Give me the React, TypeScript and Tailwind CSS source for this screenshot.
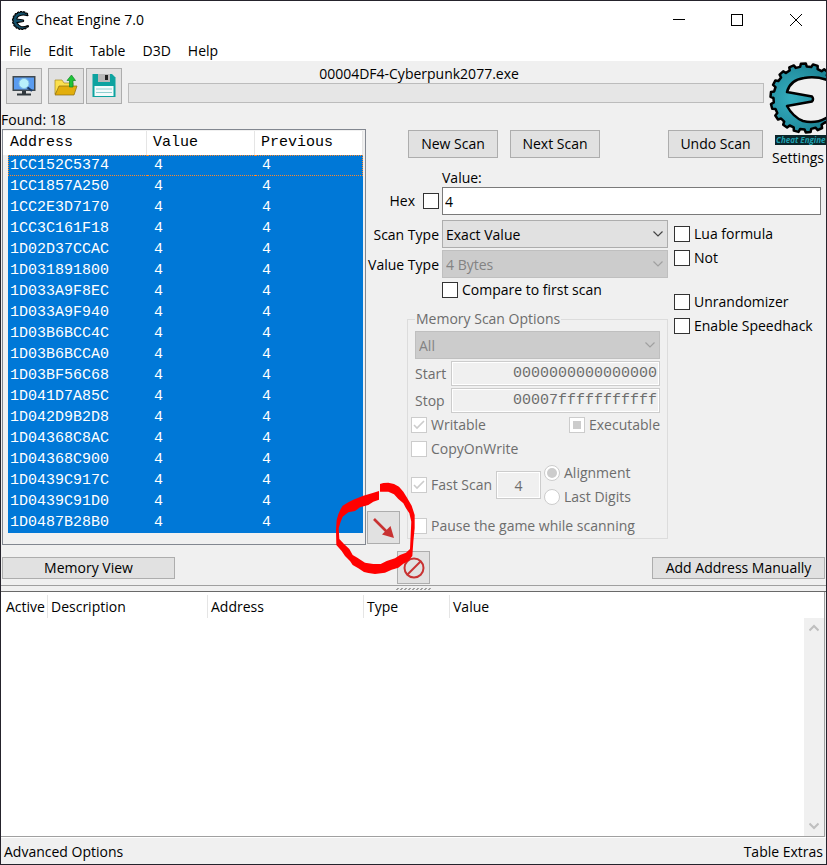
import type { ReactNode } from "react";

const addresses = [
  "1CC152C5374", "1CC1857A250", "1CC2E3D7170", "1CC3C161F18", "1D02D37CCAC", "1D031891800",
  "1D033A9F8EC", "1D033A9F940", "1D03B6BCC4C", "1D03B6BCCA0", "1D03BF56C68", "1D041D7A85C",
  "1D042D9B2D8", "1D04368C8AC", "1D04368C900", "1D0439C917C", "1D0439C91D0", "1D0487B28B0",
];

const mono = "font-['Liberation_Mono',monospace] text-[15px]";
const buttonLook = "border border-[#adadad] bg-[#e1e1e1]";

// Outer edge of the gear, walked from the upper right round the left to the lower right.
function gearEdge() {
  const points: string[] = [];
  const teeth = 14;
  const step = 284 / teeth;
  const at = (deg: number, r: number) => {
    const a = (deg * Math.PI) / 180;
    points.push(`${(36 + r * Math.cos(a)).toFixed(1)} ${(36 + r * Math.sin(a)).toFixed(1)}`);
  };
  for (let i = 0; i < teeth; i++) {
    const d = -38 - i * step;
    at(d, 31.5);
    at(d - step * 0.4, 31.5);
    at(d - step * 0.5, 34.5);
    at(d - step * 0.9, 34.5);
  }
  at(-322, 31.5);
  return points.join(" L");
}

const gearPath = `M${gearEdge()} L57 56 Q46 62 34 59 Q24 55 18 44 L43 39.5 Q45 37 43 34.500 L18 30 Q21 18 35 16 Q47 14 58 18 Z`;

function Gear({ className, box, fill, stroke }: { className: string; box: string; fill: string; stroke: number }) {
  return (
    <svg className={className} viewBox={box} aria-hidden="true">
      <defs>
        <radialGradient id="teal" cx="0.35" cy="0.5" r="0.6">
          <stop offset="0" stopColor="#35aebf" />
          <stop offset="1" stopColor="#1c8496" />
        </radialGradient>
      </defs>
      <path d={gearPath} fill={fill} stroke="#000" strokeWidth={stroke} strokeLinejoin="round" />
    </svg>
  );
}

function Check({ label, checked, mixed, disabled, before }: { label: string; checked?: boolean; mixed?: boolean; disabled?: boolean; before?: boolean }) {
  return (
    <label className={`flex h-5 items-center whitespace-nowrap ${before ? "gap-2" : "gap-1"} ${disabled ? "text-[#6d6d6d]" : ""}`}>
      {before && label}
      <span className="relative flex">
        <input
          type="checkbox"
          defaultChecked={checked}
          disabled={disabled}
          className="size-4 appearance-none border border-[#333] bg-white disabled:border-[#ccc]"
        />
        {checked && (
          <svg className="pointer-events-none absolute inset-0 size-4" viewBox="0 0 16 16" fill="none" aria-hidden="true">
            <path d="M3 8l3 3 7-7" stroke="#ccc" strokeWidth="1.6" />
          </svg>
        )}
        {mixed && <span className="pointer-events-none absolute inset-1 bg-[#ccc]" />}
      </span>
      {!before && label}
    </label>
  );
}

function Radio({ label, checked }: { label: string; checked?: boolean }) {
  return (
    <label className="flex h-6 items-center gap-1 whitespace-nowrap text-[#6d6d6d]">
      <span className="relative flex">
        <input type="radio" name="fast" defaultChecked={checked} disabled className="size-4 appearance-none rounded-full border border-[#ccc] bg-white" />
        {checked && <span className="pointer-events-none absolute inset-[3px] rounded-full bg-[#ccc]" />}
      </span>
      {label}
    </label>
  );
}

function Drop({ id, label, value, disabled }: { id: string; label?: string; value: string; disabled?: boolean }) {
  return (
    <div className="relative min-w-0 flex-1">
      <select
        id={id}
        aria-label={label}
        disabled={disabled}
        className="block h-7 w-full appearance-none border border-[#adadad] bg-[#e1e1e1] pt-px pl-[3px] opacity-100 disabled:border-[#bfbfbf] disabled:bg-[#ccc] disabled:text-[#838383]"
      >
        <option>{value}</option>
      </select>
      <svg className={`pointer-events-none absolute top-2.5 right-1 h-2 w-3 ${disabled ? "text-[#a0a0a0]" : "text-[#444]"}`} viewBox="0 0 12 8" fill="none" aria-hidden="true">
        <path d="M1.5 1.5L6 6l4.500-4.500" stroke="currentColor" strokeWidth="1.200" />
      </svg>
    </div>
  );
}

function Tool({ label, children }: { label: string; children: ReactNode }) {
  return (
    <button aria-label={label} className={`flex size-9 items-center justify-center ${buttonLook}`}>
      <svg className="size-6" viewBox="0 0 24 24" aria-hidden="true">{children}</svg>
    </button>
  );
}

function TitleBar() {
  return (
    <header className="bg-white">
      <div className="flex h-[38px] items-center pl-2.5">
        <Gear className="size-[19px]" box="0 0 64 72" fill="#14516b" stroke={4} />
        <h1 className="ml-[5px] flex-1">Cheat Engine 7.0</h1>
        <button aria-label="Minimize" className="flex w-[58px] justify-center">
          <svg className="size-3" viewBox="0 0 12 12" aria-hidden="true"><path d="M0 5.500h12" stroke="#000" /></svg>
        </button>
        <button aria-label="Maximize" className="flex w-[58px] justify-center">
          <svg className="size-3" viewBox="0 0 12 12" aria-hidden="true"><rect x=".5" y=".5" width="11" height="11" fill="none" stroke="#000" /></svg>
        </button>
        <button aria-label="Close" className="flex w-[60px] justify-center">
          <svg className="size-3" viewBox="0 0 12 12" aria-hidden="true"><path d="M0 0l12 12M12 0L0 12" stroke="#000" /></svg>
        </button>
      </div>
      <nav className="flex h-[22px] items-end gap-[17px] pl-2">
        {["File", "Edit", "Table", "D3D", "Help"].map((m) => <button key={m}>{m}</button>)}
      </nav>
    </header>
  );
}

function Toolbar() {
  return (
    <div className="col-span-2 flex pt-[7px] pl-[5px]">
      <div className="flex gap-0.5">
        <Tool label="Select a process">
          <rect x=".5" y="2" width="23" height="15" fill="#40494f" />
          <rect x="2" y="3.500" width="20" height="12" fill="#5a9cf0" />
          <path d="M10 17h4v3h-4z" fill="#30383d" /><path d="M5 20.500h14" stroke="#30383d" strokeWidth="2" />
          <path d="M15 13l5 4" stroke="#1c3c66" strokeWidth="2.200" />
          <circle cx="12" cy="9.500" r="5" fill="#b8f0fb" stroke="#83bfe6" />
        </Tool>
        <span className="w-0.5" />
        <Tool label="Open file">
          <path d="M1 20V6h7l2 3h9v5H6z" fill="#fbe04f" stroke="#a88a1c" strokeWidth=".7" />
          <path d="M1 21l4-9h18l-3 9z" fill="#e2ae0c" stroke="#8b6c10" strokeWidth=".7" />
          <path d="M15.500 13V6.500H13L17.500 1l4 5.500h-2.500V13z" fill="#1fc43a" stroke="#128526" strokeWidth=".7" />
        </Tool>
        <Tool label="Save">
          <path d="M.5 0H20l3.500 3.500V23H.5z" fill="#0da3a0" />
          <path d="M6 0h12v8H6z" fill="#b8b8b8" /><path d="M13 1h3v5h-3z" fill="#222" />
          <path d="M2.500 12h19v10h-19z" fill="#f4fbfb" />
          <path d="M4 15h16M4 18.500h16" stroke="#8fcfd0" />
        </Tool>
      </div>
      <div className="mr-px ml-1.5 flex flex-1 flex-col">
        <p className="-mt-1 h-5 pr-[54px] text-center">00004DF4-Cyberpunk2077.exe</p>
        <div role="progressbar" aria-label="Scan progress" className="-mt-px h-5 border border-[#bcbcbc] bg-[#e6e6e6]" />
      </div>
    </div>
  );
}

function Results() {
  return (
    <section className="row-span-2 flex flex-col">
      <p className="h-5 leading-[22px]">Found: 18</p>
      <div className="ml-px flex-1 border border-[#828790] pt-px pr-0.5 pb-2.5">
        <table className={`w-full table-fixed border-separate border-spacing-0 text-left ${mono}`}>
          <colgroup>
            <col className="w-[5px]" /><col className="w-[139px]" /><col className="w-[108px]" /><col />
          </colgroup>
          <thead className="bg-white">
            <tr className="h-6 leading-5">
              <th colSpan={2} className="border-r border-[#e5e5e5] pl-[7px] font-normal">Address</th>
              <th className="border-r border-[#e5e5e5] pl-1.5 font-normal">Value</th>
              <th className="border-r border-[#e5e5e5] pl-1.5 font-normal">Previous</th>
            </tr>
          </thead>
          <tbody className="text-white">
            {addresses.map((a, i) => {
              const line = i === 0 ? "border-y border-dotted border-[#ff8728]" : "";
              return (
                <tr key={a} className="h-[21px] leading-[19px]">
                  <td />
                  <td className={`bg-[#0078d7] ${line} ${i === 0 ? "border-l pl-px" : "pl-0.5"}`}>{a}</td>
                  <td className={`bg-[#0078d7] pl-[7px] ${line}`}>4</td>
                  <td className={`bg-[#0078d7] pl-[7px] ${line} ${i === 0 ? "border-r" : ""}`}>4</td>
                </tr>
              );
            })}
          </tbody>
        </table>
      </div>
    </section>
  );
}

function MemoryOptions() {
  return (
    <fieldset disabled className="ml-[7px] min-w-0 flex-1 border border-[#dcdcdc] px-[7px] pt-0.5 pb-0.5 text-[#6d6d6d]">
      <legend className="h-5 px-px leading-5">Memory Scan Options</legend>
      <div className="flex"><Drop id="region" label="Memory region" value="All" disabled /></div>
      {[["Start", "0000000000000000"], ["Stop", "00007fffffffffff"]].map(([label, value]) => (
        <label key={label} className="mt-0.5 flex h-[25px] items-center">
          <span className="w-9">{label}</span>
          <input defaultValue={value} className={`h-full min-w-0 flex-1 border border-[#ccc] bg-[#f0f0f0] px-0.5 text-right shadow-[inset_0_0_0_1px_#fff] ${mono}`} />
        </label>
      ))}
      <div className="-ml-1 flex flex-col">
        <div className="mt-0.5 flex justify-between">
          <Check label="Writable" checked disabled />
          <Check label="Executable" mixed disabled />
        </div>
        <div className="mt-1"><Check label="CopyOnWrite" disabled /></div>
        <div className="mt-0.5 flex h-12 items-center">
          <div className="w-[85px]"><Check label="Fast Scan" checked disabled /></div>
          <input aria-label="Alignment value" defaultValue="4" className="h-7 w-[45px] border border-[#ccc] bg-[#f0f0f0] text-center shadow-[inset_0_0_0_1px_#fff]" />
          <div className="ml-[3px]"><Radio label="Alignment" checked /><Radio label="Last Digits" /></div>
        </div>
        <div className="mt-[7px]"><Check label="Pause the game while scanning" disabled /></div>
      </div>
    </fieldset>
  );
}

function ScanPanel() {
  return (
    <section className="col-span-2">
      <label htmlFor="value" className="ml-[76px] block h-[19px] leading-[19px]">Value:</label>
      <div className="flex items-center pr-[5px]">
        <div className="flex w-[76px] justify-end pr-[3px]"><Check label="Hex" before /></div>
        <input id="value" defaultValue="4" className="h-7 min-w-0 flex-1 border border-[#7a7a7a] bg-white px-0.5" />
      </div>
      <div className="flex">
        <div className="min-w-0 flex-1 pt-[5px]">
          <div className="flex items-center">
            <label htmlFor="scan" className="w-[76px] pt-px pr-[3px] text-right whitespace-nowrap">Scan Type</label>
            <Drop id="scan" value="Exact Value" />
          </div>
          <div className="mt-0.5 flex items-center">
            <label htmlFor="type" className="flex w-[76px] justify-end pt-px pr-[3px] whitespace-nowrap">Value Type</label>
            <Drop id="type" value="4 Bytes" disabled />
          </div>
          <div className="mt-0.5 ml-[76px]"><Check label="Compare to first scan" /></div>
          <div className="mt-[9px] flex items-end pb-1.5">
            <div className="relative -mb-[5px] ml-px">
              <button aria-label="Copy selected items to the address list" className={`flex size-[33px] items-center justify-center ${buttonLook}`}>
                <svg className="size-6" viewBox="0 0 24 24" aria-hidden="true">
                  <path d="M2 3l13 13" stroke="#c83232" strokeWidth="2.600" /><path d="M22 22L10 18.500 18.500 10z" fill="#c83232" />
                </svg>
              </button>
              <svg className="pointer-events-none absolute -top-9 -left-[47px] z-10 h-[125px] w-[130px] max-w-none" viewBox="0 0 390 375" aria-hidden="true">
                <path
                  fill="#f00"
                  d="M177 48L158 54 130 62 100 74 85 82 68 92 62 102 55 118 50 135 48 165 49 210 65 228 75 243 90 258 98 270 115 280 132 291 145 294 165 297 195 293 215 284 235 278 250 266 265 258 277 243 280 200 284 160 284 120 275 92 262 70 250 50 237 35 222 27 205 23 190 24 180 27V50L205 50 222 58 235 72 250 85 258 100 268 115 274 140 272 180 270 222 258 233 240 240 225 250 200 258 182 267 160 267 135 263 112 248 98 240 88 222 72 207 58 192 56 160 62 140 68 125 85 112 105 108 120 97 145 90 160 80 177 74z"
                />
              </svg>
            </div>
            <MemoryOptions />
          </div>
        </div>
        <div className="w-[158px] pt-[9px] pl-1.5">
          <Check label="Lua formula" />
          <div className="mt-1"><Check label="Not" /></div>
          <div className="mt-6"><Check label="Unrandomizer" /></div>
          <div className="mt-1"><Check label="Enable Speedhack" /></div>
        </div>
      </div>
    </section>
  );
}

export default function App() {
  return (
    <div className="flex min-h-screen flex-col overflow-hidden border border-[#25232c] bg-[#f0f0f0] font-['Open_Sans',sans-serif] text-[14px] leading-5 text-black">
      <TitleBar />
      <main className="flex flex-1 flex-col">
        <div className="grid grid-cols-[365px_minmax(0,1fr)_61px] grid-rows-[48px_59px_auto]">
          <Toolbar />
          <button className="row-span-2 flex flex-col items-end overflow-hidden pt-px">
            <Gear className="ml-1 h-[72px] w-[57px] shrink-0" box="0 0 57 72" fill="url(#teal)" stroke={2.5} />
            <svg className="h-3 w-[51px] shrink-0" viewBox="0 0 51 12" aria-label="Cheat Engine">
              <rect y="1" width="51" height="10" fill="#0b2529" />
              <text x="1" y="9" fill="#20a0b0" className="font-['Open_Sans',sans-serif] text-[8px] font-bold italic">Cheat Engine</text>
            </svg>
            <span className="pt-0.5 pr-0.5">Settings</span>
          </button>
          <Results />
          <div className="flex items-start pt-[21px] pl-[42px]">
            <button className={`h-7 w-[90px] ${buttonLook}`}>New Scan</button>
            <button className={`ml-3 h-7 w-[90px] ${buttonLook}`}>Next Scan</button>
            <button className={`mr-0.5 ml-auto h-7 w-[95px] ${buttonLook}`}>Undo Scan</button>
          </div>
          <ScanPanel />
        </div>
        <div className="grid h-10 grid-cols-[1fr_auto_1fr] items-center px-px">
          <button className={`mt-1.5 flex h-[22px] w-[173px] items-center justify-center ${buttonLook}`}>Memory View</button>
          <button aria-label="Clear list" className={`mt-[5px] flex size-[33px] items-center justify-center ${buttonLook}`}>
            <svg className="size-[22px]" viewBox="0 0 22 22" fill="none" stroke="#c83232" strokeWidth="2" aria-hidden="true">
              <circle cx="11" cy="11" r="9.500" /><path d="M4.500 17.500l13-13" />
            </svg>
          </button>
          <button className={`mt-1.5 flex h-[22px] w-[173px] items-center justify-center justify-self-end ${buttonLook}`}>Add Address Manually</button>
        </div>
        <div className="flex h-[7px] items-center justify-center border-t border-b border-t-[#a0a0a0] border-b-[#696969]">
          <svg className="h-[3px] w-[38px]" viewBox="0 0 38 3" aria-hidden="true">
            <path d="M1 2.500L37 2.500" stroke="#a0a0a0" strokeWidth="1" strokeDasharray="2 2" /><path d="M2 1.500H38" stroke="#a0a0a0" strokeDasharray="2 2" />
          </svg>
        </div>
        <section className="mr-px flex flex-1 flex-col border-r border-b border-[#a0a0a0] bg-white pt-[3px]">
          <table className="w-full table-fixed border-separate border-spacing-0 text-left">
            <colgroup><col className="w-[47px]" /><col className="w-40" /><col className="w-[156px]" /><col className="w-[86px]" /><col /></colgroup>
            <thead>
              <tr className="h-[23px]">
                {["Active", "Description", "Address", "Type"].map((h) => (
                  <th key={h} className={`overflow-hidden border-r border-[#e5e5e5] font-normal whitespace-nowrap ${h === "Active" ? "pl-[5px]" : "pl-[3px]"}`}>{h}</th>
                ))}
                <th className="pl-[3px] font-normal">Value</th>
              </tr>
            </thead>
          </table>
          <div className="flex w-5 flex-1 flex-col items-center justify-between self-end bg-[#f0f0f0] py-1.5">
            <svg className="h-2 w-2.5" viewBox="0 0 10 8" fill="none" aria-hidden="true"><path d="M.5 6.500L5 2l4.500 4.500" stroke="#bfbfbf" strokeWidth="2" /></svg>
            <svg className="h-2 w-2.5" viewBox="0 0 10 8" fill="none" aria-hidden="true"><path d="M.5 1.500L5 6l4.500-4.500" stroke="#bfbfbf" strokeWidth="2" /></svg>
          </div>
        </section>
      </main>
      <footer className="flex h-[27px] items-center justify-between border-t border-white px-[3px] pt-0.5">
        <button>Advanced Options</button>
        <button>Table Extras</button>
      </footer>
    </div>
  );
}
